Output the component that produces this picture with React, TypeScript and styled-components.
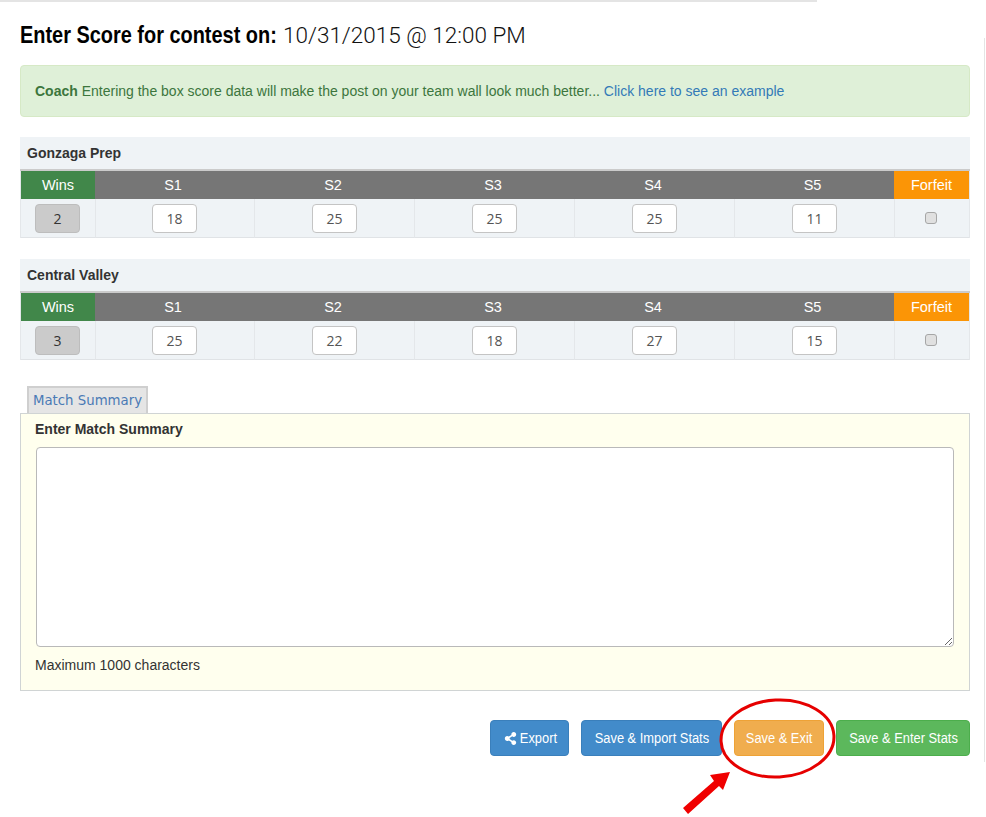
import React from "react";
import styled, { createGlobalStyle } from "styled-components";
import { FaShareAlt } from "react-icons/fa";

const Global = createGlobalStyle`
  html, body { margin: 0; padding: 0; background: #fff; }
  body { font-family: "Liberation Sans", Arial, sans-serif; color: #333; }
  * { box-sizing: border-box; }
`;

const Page = styled.div`
  position: relative;
  width: 986px;
  height: 817px;
  overflow: hidden;
  padding: 0 16px 0 20px;
`;
const TopRule = styled.div`
  position: absolute;
  left: 0;
  top: 0;
  width: 817px;
  height: 2px;
  background: #e4e4e4;
`;
const SideRule = styled.div`
  position: absolute;
  left: 984px;
  top: 38px;
  width: 1px;
  height: 724px;
  background: #e4e4e4;
`;
const Title = styled.h1`
  margin: 0;
  padding-top: 21px;
  height: 65px;
  font-family: "Roboto", sans-serif;
  font-weight: 300;
  font-size: 22.5px;
  line-height: 28px;
  color: #111;
  white-space: nowrap;
`;
const TitleStrong = styled.strong`
  display: inline-block;
  width: 257px;
  margin-right: 6px;
  font-family: "Liberation Sans", sans-serif;
  font-weight: 700;
  font-size: 24px;
  color: #000;
  transform: scaleX(0.83);
  transform-origin: left center;
`;
const Alert = styled.div`
  height: 52px;
  background: #dff0d8;
  border: 1px solid #d6e9c6;
  border-radius: 4px;
  color: #3c763d;
  font-size: 14px;
  line-height: 51px;
  padding-left: 14px;
  white-space: nowrap;
`;
const AlertLink = styled.a`
  color: #337ab7;
`;
const Team = styled.section`
  margin-top: 20px;
  & + & { margin-top: 21px; }
`;
const TeamName = styled.div`
  height: 34px;
  background: #eff3f6;
  border-bottom: 2px solid #cbcbcb;
  font-weight: 700;
  font-size: 14px;
  line-height: 32px;
  padding-left: 7px;
  color: #333;
`;
const HeadRow = styled.div`
  display: grid;
  grid-template-columns: 74px 160px 160px 160px 160px 159px 75px;
  border-left: 1px solid #e4e7ea;
  border-right: 1px solid #e4e7ea;
`;
const BodyRow = styled.div`
  display: grid;
  grid-template-columns: 75px 159px 160px 160px 160px 160px 74px;
  border-left: 1px solid #e4e7ea;
  border-right: 1px solid #e4e7ea;
`;
const Head = styled.div<{ $bg: string; $shift?: number }>`
  height: 28px;
  padding-right: ${(p) => p.$shift ?? 0}px;
  background: ${(p) => p.$bg};
  color: #fff;
  font-size: 14.5px;
  line-height: 28px;
  text-align: center;
`;
const Cell = styled.div`
  height: 39px;
  background: #eff3f6;
  border-bottom: 1px solid #e0e3e6;
  border-right: 1px solid #e4e7ea;
  display: flex;
  align-items: center;
  justify-content: center;
  &:nth-child(-n + 2) { padding-right: 1px; }
  &:last-child { border-right: 0; }
`;
const Score = styled.div<{ $wins?: boolean }>`
  flex: none;
  width: 45px;
  height: 29px;
  border: 1px solid ${(p) => (p.$wins ? "#bdbdbd" : "#c4c4c4")};
  border-radius: 4px;
  background: ${(p) => (p.$wins ? "#cbcbcb" : "#fff")};
  color: ${(p) => (p.$wins ? "#333" : "#555")};
  font-family: "Open Sans", sans-serif;
  font-size: 14px;
  line-height: 27px;
  text-align: center;
`;
const Check = styled.input`
  appearance: none;
  margin: 0 2px 0 0;
  width: 12px;
  height: 12px;
  background: #e0e0e0;
  border: 1px solid #a6a6a6;
  border-radius: 3px;
`;
const TabBar = styled.div`
  display: flex;
  padding: 26px 0 0 7px;
`;
const Tab = styled.div`
  width: 121px;
  height: 27px;
  background: #e5e5e5;
  border: 2px solid #cfcfcf;
  border-bottom: 0;
  color: #4a7ab5;
  font-family: "DejaVu Sans", sans-serif;
  font-size: 13.3px;
  line-height: 25px;
  text-align: center;
  white-space: nowrap;
`;
const Panel = styled.div`
  height: 278px;
  background: #ffffee;
  border: 1px solid #d0d4d4;
  padding: 7px 15px 0 14px;
`;
const PanelLabel = styled.div`
  font-size: 14px;
  font-weight: 700;
  line-height: 17px;
  color: #333;
`;
const Area = styled.textarea`
  display: block;
  width: 918px;
  height: 200px;
  margin: 9px 0 0 1px;
  background: #fff;
  border: 1px solid #b9b9b9;
  border-radius: 4px;
  outline: 0;
`;
const Hint = styled.div`
  margin-top: 11px;
  font-size: 14px;
  line-height: 15px;
  color: #333;
`;
const Actions = styled.div`
  display: flex;
  justify-content: flex-end;
  margin-top: 29px;
`;
const Btn = styled.button<{ $bg: string; $border: string; $w: number }>`
  width: ${(p) => p.$w}px;
  height: 36px;
  margin-left: 12px;
  padding: 0;
  display: flex;
  align-items: center;
  justify-content: center;
  background: ${(p) => p.$bg};
  border: 1px solid ${(p) => p.$border};
  border-radius: 4px;
  color: #fff;
  font-family: "Liberation Sans", sans-serif;
  font-size: 15.5px;
`;
const BtnLabel = styled.span`
  flex: none;
  white-space: nowrap;
  transform: scaleX(0.83);
`;
const ExportLabel = styled(BtnLabel)`
  margin: 0 -5px 0 -1px;
`;
const Annotation = styled.svg`
  position: absolute;
  left: 670px;
  top: 690px;
`;

const teams = [
  { name: "Gonzaga Prep", wins: 2, scores: [18, 25, 25, 25, 11] },
  { name: "Central Valley", wins: 3, scores: [25, 22, 18, 27, 15] },
];

export default function App() {
  return (
    <Page>
      <Global />
      <TopRule />
      <SideRule />
      <Title>
        <TitleStrong>Enter Score for contest on:</TitleStrong>10/31/2015 @ 12:00 PM
      </Title>
      <Alert>
        <strong>Coach</strong> Entering the box score data will make the post on your team wall look much better...{" "}
        <AlertLink>Click here to see an example</AlertLink>
      </Alert>
      {teams.map((t) => (
        <Team key={t.name}>
          <TeamName>{t.name}</TeamName>
          <HeadRow>
            <Head $bg="#41874a">Wins</Head>
            {["S1", "S2", "S3", "S4", "S5"].map((s) => (
              <Head key={s} $bg="#767676" $shift={4}>{s}</Head>
            ))}
            <Head $bg="#fb9506">Forfeit</Head>
          </HeadRow>
          <BodyRow>
            <Cell><Score $wins>{t.wins}</Score></Cell>
            {t.scores.map((s, i) => (
              <Cell key={i}><Score>{s}</Score></Cell>
            ))}
            <Cell><Check type="checkbox" readOnly /></Cell>
          </BodyRow>
        </Team>
      ))}
      <TabBar><Tab>Match Summary</Tab></TabBar>
      <Panel>
        <PanelLabel>Enter Match Summary</PanelLabel>
        <Area />
        <Hint>Maximum 1000 characters</Hint>
      </Panel>
      <Actions>
        <Btn $bg="#428bca" $border="#3a7fbb" $w={79}><FaShareAlt size={13} /><ExportLabel>Export</ExportLabel></Btn>
        <Btn $bg="#428bca" $border="#3a7fbb" $w={141}><BtnLabel>Save &amp; Import Stats</BtnLabel></Btn>
        <Btn $bg="#f0ad4e" $border="#eea236" $w={90}><BtnLabel>Save &amp; Exit</BtnLabel></Btn>
        <Btn $bg="#5cb85c" $border="#4cae4c" $w={134}><BtnLabel>Save &amp; Enter Stats</BtnLabel></Btn>
      </Actions>
      <Annotation width="180" height="127" viewBox="0 0 180 127">
        <ellipse cx="107.5" cy="48.5" rx="56.5" ry="38.5" fill="none" stroke="#e60000" strokeWidth="3" transform="rotate(-3 107.5 48.5)" />
        <path d="M13 118 L18 124 L49 96 L53 100 L60 82 L40 85 L44 91 Z" fill="#f00000" />
      </Annotation>
    </Page>
  );
}
